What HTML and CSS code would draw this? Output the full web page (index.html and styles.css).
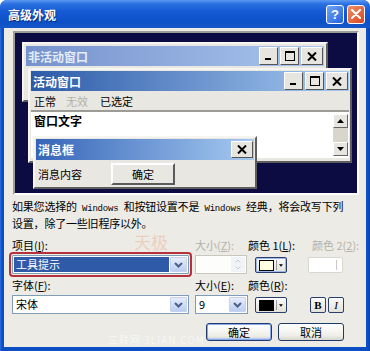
FILE: index.html
```html
<!DOCTYPE html>
<html lang="zh-CN">
<head>
  <meta charset="UTF-8" />
  <title>高级外观</title>
  <link rel="stylesheet" href="styles.css">
</head>
<body>
  <div class="dialog">
    <div class="titlebar">
      <span class="title">高级外观</span>
      <div class="tb-buttons">
        <span class="tb-btn help">?</span>
        <span class="tb-btn close">
          <svg width="10" height="10" viewBox="0 0 10 10"><path d="M1 1 L9 9 M9 1 L1 9" stroke="#fff" stroke-width="2" stroke-linecap="round"/></svg>
        </span>
      </div>
    </div>

    <div class="client">
      <!-- preview desktop with sample windows -->
      <div class="preview">
        <div class="win inactive">
          <div class="caption">
            <span class="cap-text">非活动窗口</span>
            <div class="cap-btns">
              <span class="cbtn"><svg width="8" height="8" viewBox="0 0 8 8"><rect x="0" y="6" width="6" height="2" fill="#000"/></svg></span>
              <span class="cbtn"><svg width="10" height="10" viewBox="0 0 10 10"><rect x="0.5" y="0.5" width="9" height="9" fill="none" stroke="#000"/><rect x="0" y="0" width="10" height="2" fill="#000"/></svg></span>
              <span class="cbtn wide"><svg width="10" height="9" viewBox="0 0 10 9"><path d="M1 0.5 L9 8.5 M9 0.5 L1 8.5" stroke="#000" stroke-width="2"/></svg></span>
            </div>
          </div>
        </div>

        <div class="win active">
          <div class="caption">
            <span class="cap-text">活动窗口</span>
            <div class="cap-btns">
              <span class="cbtn"><svg width="8" height="8" viewBox="0 0 8 8"><rect x="0" y="6" width="6" height="2" fill="#000"/></svg></span>
              <span class="cbtn"><svg width="10" height="10" viewBox="0 0 10 10"><rect x="0.5" y="0.5" width="9" height="9" fill="none" stroke="#000"/><rect x="0" y="0" width="10" height="2" fill="#000"/></svg></span>
              <span class="cbtn wide"><svg width="10" height="9" viewBox="0 0 10 9"><path d="M1 0.5 L9 8.5 M9 0.5 L1 8.5" stroke="#000" stroke-width="2"/></svg></span>
            </div>
          </div>
          <div class="menu">
            <span>正常</span>
            <span class="grey">无效</span>
            <span>已选定</span>
          </div>
          <div class="textarea">
            <span class="wtext">窗口文字</span>
            <div class="scroll">
              <span class="sbtn"><svg width="7" height="4" viewBox="0 0 7 4"><path d="M3.5 0 L7 4 L0 4 Z" fill="#000"/></svg></span>
              <span class="track"></span>
              <span class="sbtn"><svg width="7" height="4" viewBox="0 0 7 4"><path d="M0 0 L7 0 L3.5 4 Z" fill="#000"/></svg></span>
            </div>
          </div>
        </div>

        <div class="win msgbox">
          <div class="caption">
            <span class="cap-text">消息框</span>
            <div class="cap-btns">
              <span class="cbtn wide"><svg width="10" height="9" viewBox="0 0 10 9"><path d="M1 0.5 L9 8.5 M9 0.5 L1 8.5" stroke="#000" stroke-width="2"/></svg></span>
            </div>
          </div>
          <div class="msg-body">
            <span>消息内容</span>
            <span class="classic-btn">确定</span>
          </div>
        </div>
      </div>

      <p class="note">如果您选择的<span class="en"> Windows </span>和按钮设置不是<span class="en"> Windows </span>经典，将会改写下列<br>设置，除了一些旧程序以外。</p>

      <div class="form">
        <span class="lbl">项目(<u>I</u>):</span>
        <span class="lbl grey">大小(<u>Z</u>):</span>
        <span class="lbl">颜色 1(<u>L</u>):</span>
        <span class="lbl grey c2">颜色 2(<u>2</u>):</span>

        <div class="combo marked">
          <span class="value sel">工具提示</span>
          <span class="drop"><svg width="9" height="6" viewBox="0 0 9 6"><path d="M1 1 L4.5 4.5 L8 1" fill="none" stroke="#4d6185" stroke-width="2"/></svg></span>
        </div>
        <div class="spin">
          <span class="spin-btns">
            <svg width="6" height="4" viewBox="0 0 6 4"><path d="M0.5 3.5 L3 1 L5.5 3.5" fill="none" stroke="#c6ccd8"/></svg>
            <svg width="6" height="4" viewBox="0 0 6 4"><path d="M0.5 0.5 L3 3 L5.5 0.5" fill="none" stroke="#c6ccd8"/></svg>
          </span>
        </div>
        <div class="cell-color">
          <span class="colorbtn focus">
            <span class="swatch pale"></span>
            <span class="sep"></span>
            <svg width="5" height="3" viewBox="0 0 5 3"><path d="M0 0 L5 0 L2.5 3 Z" fill="#000"/></svg>
          </span>
        </div>
        <div class="cell-last">
          <span class="colorbtn off">
            <span class="swatch blank"></span>
            <span class="sep"></span>
          </span>
        </div>

        <span class="lbl">字体(<u>F</u>):</span>
        <span class="lbl">大小(<u>E</u>):</span>
        <span class="lbl">颜色(<u>R</u>):</span>
        <span></span>

        <div class="combo">
          <span class="value">宋体</span>
          <span class="drop"><svg width="9" height="6" viewBox="0 0 9 6"><path d="M1 1 L4.5 4.5 L8 1" fill="none" stroke="#4d6185" stroke-width="2"/></svg></span>
        </div>
        <div class="combo small">
          <span class="value">9</span>
          <span class="drop"><svg width="9" height="6" viewBox="0 0 9 6"><path d="M1 1 L4.5 4.5 L8 1" fill="none" stroke="#4d6185" stroke-width="2"/></svg></span>
        </div>
        <div class="cell-color">
          <span class="colorbtn">
            <span class="swatch black"></span>
            <span class="sep"></span>
            <svg width="5" height="3" viewBox="0 0 5 3"><path d="M0 0 L5 0 L2.5 3 Z" fill="#000"/></svg>
          </span>
        </div>
        <div class="cell-last styles">
          <span class="sq-btn bold">B</span>
          <span class="sq-btn italic">I</span>
        </div>
      </div>

      <div class="actions">
        <button class="xp-btn default">确定</button>
        <button class="xp-btn">取消</button>
      </div>

      <span class="mark-logo">天极</span>
      <span class="mark-site">三联网 3LIAN.COM</span>
    </div>
  </div>
</body>
</html>
```

FILE: styles.css
```css
body {
  margin: 0;
  width: 370px;
  height: 351px;
  overflow: hidden;
  font-family: "Noto Sans CJK SC", "DejaVu Sans", sans-serif;
  font-size: 11px;
  color: #000;
}

.dialog {
  width: 370px;
  height: 351px;
  display: flex;
  flex-direction: column;
  background: linear-gradient(to right, #2a6ee0, #0c4fc4 2px, #0c4fc4 calc(100% - 2px), #0a3fa8);
  border-radius: 7px 7px 0 0;
  overflow: hidden;
}

.titlebar {
  height: 28px;
  flex: none;
  display: flex;
  align-items: center;
  justify-content: space-between;
  padding: 0 5px 0 8px;
  background: linear-gradient(#5c9af0 0, #2a70e0 4px, #1659d4 12px, #0d51c8 22px, #1656c6 28px);
}

.title {
  color: #fff;
  font-weight: bold;
  font-size: 12px;
  text-shadow: 1px 1px 0 #0a2c78;
}

.tb-buttons {
  display: flex;
  gap: 3px;
}

.tb-btn {
  width: 16px;
  height: 17px;
  border: 1px solid #fff;
  border-radius: 3px;
  display: flex;
  align-items: center;
  justify-content: center;
  color: #fff;
  font-weight: bold;
  font-size: 13px;
  font-family: "Liberation Sans", sans-serif;
}

.help {
  background: linear-gradient(135deg, #6fa6f6, #2460dc);
}

.close {
  background: linear-gradient(135deg, #f0906a, #d8461e);
}

.client {
  flex: 1;
  margin: 0 4px 4px;
  background: #ecebe6;
  position: relative;
  display: flex;
  flex-direction: column;
}

/* preview area */

.preview {
  margin: 3px 0 0 9px;
  width: 342px;
  height: 160px;
  background: #0c0c42;
  border: 2px solid;
  border-color: #9d9c98 #ffffff #ffffff #9d9c98;
  position: relative;
  flex: none;
}

.win {
  position: absolute;
  background: #e8e7e2;
  border: 2px solid;
  border-color: #f6f5f1 #5e5e5e #5e5e5e #f6f5f1;
  padding: 1px;
  box-sizing: border-box;
}

.inactive {
  left: 7px;
  top: 9px;
  width: 306px;
  height: 60px;
  padding: 2px;
}

.active {
  left: 13px;
  top: 35px;
  width: 324px;
  height: 95px;
}

.msgbox {
  left: 18px;
  top: 103px;
  width: 224px;
  height: 53px;
}

.caption {
  height: 20px;
  display: flex;
  align-items: center;
  justify-content: space-between;
  padding: 0 1px 0 2px;
}

.inactive .caption {
  background: linear-gradient(to right, #7692cc, #a9c6ef);
}

.active .caption {
  background: linear-gradient(to right, #2b5aa8, #a7caf1);
}

.msgbox .caption {
  height: 21px;
  background: linear-gradient(to right, #3565b8, #a7caf1);
}

.cap-text {
  color: #fff;
  font-weight: bold;
  font-size: 12px;
}

.inactive .cap-text {
  color: #e4ecf8;
}

.cap-btns {
  display: flex;
  gap: 2px;
}

.cbtn {
  width: 17px;
  height: 16px;
  background: #e6e5e0;
  border: 1px solid;
  border-color: #ffffff #555 #555 #ffffff;
  display: flex;
  align-items: center;
  justify-content: center;
}

.cbtn.wide {
  width: 20px;
}

.msgbox .cbtn {
  height: 15px;
}

.menu {
  height: 19px;
  display: flex;
  align-items: center;
  gap: 10px;
  padding-left: 3px;
}

.menu span:last-child {
  margin-left: 2px;
}

.grey {
  color: #b3b1a8;
}

.textarea {
  height: 46px;
  background: #fff;
  border-top: 2px solid #9c9b96;
  display: flex;
  justify-content: space-between;
  padding-left: 3px;
}

.wtext {
  font-weight: bold;
  font-size: 12px;
  line-height: 17px;
}

.scroll {
  width: 15px;
  margin: 2px 1px 0 0;
  display: flex;
  flex-direction: column;
}

.sbtn {
  height: 12px;
  background: #e6e5e0;
  border: 1px solid;
  border-color: #fff #666 #666 #fff;
  display: flex;
  align-items: center;
  justify-content: center;
}

.track {
  height: 14px;
  background: #d8d6cc;
}

.msg-body {
  height: 27px;
  display: flex;
  align-items: center;
  padding-left: 2px;
  gap: 29px;
}

.classic-btn {
  width: 60px;
  height: 18px;
  display: flex;
  align-items: center;
  justify-content: center;
  border: 2px solid;
  border-color: #fff #5a5a5a #5a5a5a #fff;
  background: #e8e7e2;
}

/* description */

.note {
  margin: 4px 0 0 8px;
  line-height: 14px;
  white-space: nowrap;
  letter-spacing: -0.2px;
}

.en {
  font-family: "Liberation Mono", monospace;
  font-size: 9px;
}

/* form grid */

.form {
  margin: 8px 0 0 8px;
  display: grid;
  grid-template-columns: 183px 53px 60px 58px;
  grid-template-rows: 14px 20px 14px 20px;
  row-gap: 3px;
}

.lbl {
  line-height: 14px;
  white-space: nowrap;
}

.lbl u {
  text-decoration: underline;
}

.lbl.c2 {
  margin-left: 4px;
}

.combo {
  width: 177px;
  height: 19px;
  box-sizing: border-box;
  border: 1px solid #7f9db9;
  background: #fff;
  display: flex;
  align-items: stretch;
  padding: 1px;
}

.combo.small {
  width: 53px;
}

.combo .value {
  flex: 1;
  line-height: 15px;
  padding-left: 2px;
}

.combo .value.sel {
  background: #2f5aa8;
  color: #fff;
  margin-right: 1px;
}

.combo.marked {
  outline: 2px solid #b5323c;
  outline-offset: 1px;
  border-radius: 1px;
}

.drop {
  width: 15px;
  background: linear-gradient(#e6edfc, #bccdf3);
  border: 1px solid #c4d1ef;
  border-radius: 1px;
  display: flex;
  align-items: center;
  justify-content: center;
}

.spin {
  width: 52px;
  height: 19px;
  box-sizing: border-box;
  border: 1px solid #c9c7ba;
  background: #fdfdfc;
  display: flex;
  justify-content: flex-end;
  padding: 1px;
}

.spin-btns {
  width: 14px;
  display: flex;
  flex-direction: column;
  align-items: center;
  justify-content: space-around;
  background: #f2f3f6;
}

.cell-color {
  padding-left: 7px;
  display: flex;
  align-items: center;
}

.cell-last {
  display: flex;
  align-items: center;
}

.colorbtn {
  width: 32px;
  height: 16px;
  box-sizing: border-box;
  border: 1px solid #2a3f6c;
  border-radius: 2px;
  background: linear-gradient(#fbfbf9, #e2e1da);
  display: flex;
  align-items: center;
  padding: 0 3px;
  gap: 2px;
}

.colorbtn.focus {
  box-shadow: inset 0 0 0 1px #9db8ea;
}

.colorbtn.off {
  width: 35px;
  border-color: #d9d8d0;
  background: #fff;
}

.swatch {
  width: 17px;
  height: 9px;
  border: 1px solid #000;
}

.swatch.pale {
  background: #ffffe1;
}

.swatch.black {
  background: #000;
}

.swatch.blank {
  width: 20px;
  border-color: transparent;
}

.sep {
  width: 1px;
  height: 10px;
  background: #9a9a9a;
}

.colorbtn.off .sep {
  background: #c8c8c8;
}

.styles {
  gap: 2px;
  padding-left: 2px;
}

.sq-btn {
  width: 16px;
  height: 16px;
  box-sizing: border-box;
  border: 1px solid #2a3f6c;
  border-radius: 2px;
  background: linear-gradient(#fbfbf9, #e2e1da);
  display: flex;
  align-items: center;
  justify-content: center;
  font-family: "Liberation Serif", serif;
  font-size: 11px;
}

.bold {
  font-weight: bold;
}

.italic {
  font-style: italic;
}

/* dialog buttons */

.actions {
  margin-top: 8px;
  padding-right: 22px;
  display: flex;
  justify-content: flex-end;
  gap: 6px;
}

.xp-btn {
  width: 66px;
  height: 18px;
  padding: 0;
  font-family: "Noto Sans CJK SC", sans-serif;
  font-size: 11px;
  line-height: 14px;
  border: 1px solid #1f3b6e;
  border-radius: 3px;
  background: linear-gradient(#ffffff, #f0f0ea 70%, #d8d6cc);
}

.xp-btn.default {
  box-shadow: inset 0 0 0 1px #88a8e8, inset 0 -1px 0 1px #b8ccf4;
}

/* watermarks over the screenshot */

.mark-logo {
  position: absolute;
  left: 130px;
  top: 205px;
  font-size: 17px;
  line-height: 18px;
  color: rgba(236, 150, 110, 0.35);
}

.mark-site {
  position: absolute;
  left: 104px;
  top: 306px;
  font-size: 10px;
  line-height: 12px;
  color: rgba(255, 255, 255, 0.6);
  letter-spacing: 1px;
}
```
